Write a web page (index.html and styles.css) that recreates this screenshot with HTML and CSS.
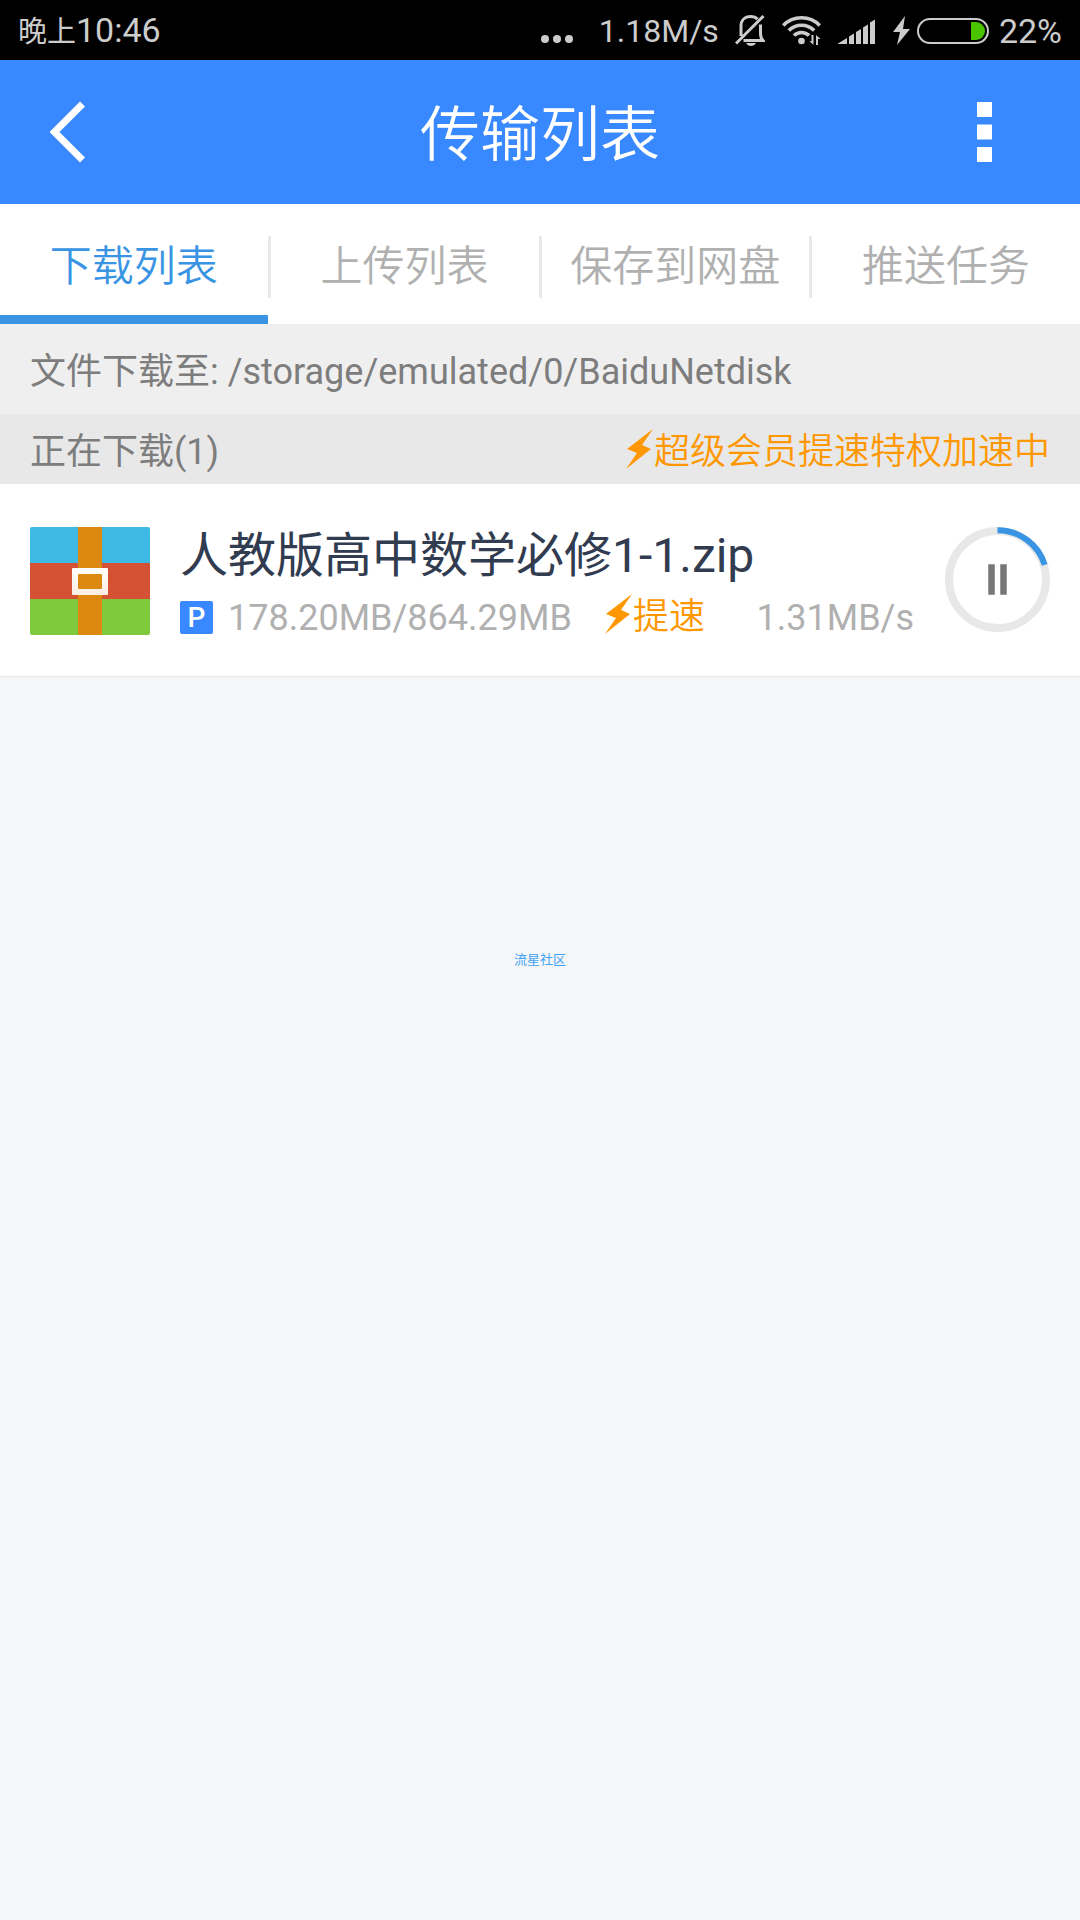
FILE: index.html
```html
<!DOCTYPE html>
<html lang="zh-CN">
<head>
<meta charset="utf-8">
<meta name="viewport" content="width=device-width, initial-scale=1">
<title>传输列表</title>
<link rel="stylesheet" href="styles.css">
</head>
<body>
<div class="status">
  <div class="status-time"><span class="status-cjk">晚上</span>10:46</div>
  <div class="status-right">
    <svg class="ic-more" width="32" height="32" viewBox="0 0 32 32" fill="currentColor" aria-hidden="true"><circle cx="4" cy="24" r="4"/><circle cx="16" cy="24" r="4"/><circle cx="28" cy="24" r="4"/></svg>
    <span class="status-speed">1.18M/s</span>
    <svg class="ic-bell" width="30" height="32" viewBox="0 0 30 32" fill="none" stroke="currentColor" stroke-width="3" aria-hidden="true"><path d="M6 21V11C6 5 10 1.500 15.500 1.500c3 0 5.500 1 7 2.600M8.500 25.500h19.500c-2-2-2.500-4-2.500-7v-9M1 28.500 28.500 1"/><path d="M11 28h10c-2 4-8 4-10 0z" fill="currentColor" stroke="none"/></svg>
    <svg class="ic-wifi" width="39" height="32" viewBox="0 0 39 32" fill="none" stroke="currentColor" stroke-width="3.600" aria-hidden="true"><path d="M1.200 10.500a25.500 25.500 0 0 1 36.600 0M6.800 15.500a18 18 0 0 1 25.400 0M12 20.600a10.500 10.500 0 0 1 15 0"/><circle cx="19.500" cy="26" r="3.300" fill="currentColor" stroke="none"/><path d="M29 19h8v11h-8z" fill="#000" stroke="none"/><path d="M31.500 20v10l-4-4h2v-6zM34 30V20l4.500 4H36v6z" fill="currentColor" stroke="none"/></svg>
    <svg class="ic-signal" width="38" height="32" viewBox="0 0 38 32" fill="currentColor" aria-hidden="true"><path d="M0 28.500 9 23v6H0zM11 21.500l5-3V29h-5zM18 17l5-3v15h-5zM25 12.500l5-3V29h-5zM32 7.500l5-3V29h-5z"/></svg>
    <svg class="ic-charge" width="17" height="32" viewBox="0 0 17 32" fill="currentColor" aria-hidden="true"><path d="M12 1 0 17h7L4 30 17 14h-7z"/></svg>
    <svg class="ic-battery" width="72" height="32" viewBox="0 0 72 32" aria-hidden="true"><rect x="1" y="4" width="70" height="24" rx="12" fill="none" stroke="currentColor" stroke-width="2"/><path d="M54 7h5a9 9 0 0 1 0 18h-5z" fill="#4bc400"/></svg>
    <span class="status-level">22%</span>
  </div>
</div>

<header class="header">
  <button class="header-btn header-back" type="button" aria-label="返回"><svg width="36" height="62" viewBox="0 0 36 62" fill="none" stroke="#fff" stroke-width="7"><path d="M32.500 3 4.500 31l28 28"/></svg></button>
  <h1 class="header-title">传输列表</h1>
  <button class="header-btn header-menu" type="button" aria-label="更多"><svg width="15" height="60" viewBox="0 0 15 60" fill="#fff"><path d="M0 0h15v15H0zM0 22.500h15v15H0zM0 45h15v15H0z"/></svg></button>
</header>

<nav class="tabs">
  <a class="tab tab-active" href="#download">下载列表</a>
  <a class="tab" href="#upload">上传列表</a>
  <a class="tab" href="#save">保存到网盘</a>
  <a class="tab" href="#push">推送任务</a>
</nav>

<main>
  <p class="path">文件下载至: /storage/emulated/0/BaiduNetdisk</p>
  <div class="section">
    <h2 class="section-title">正在下载(1)</h2>
    <div class="boost"><svg class="bolt" width="28" height="40" viewBox="0 0 28 40" fill="currentColor" aria-hidden="true"><path d="M27 0 1 20l10 4L0 40l25-20-9-4z"/></svg>超级会员提速特权加速中</div>
  </div>
  <ul class="list">
    <li class="item">
      <svg class="item-icon" width="120" height="108" viewBox="0 0 120 108" aria-hidden="true">
        <defs>
          <clipPath id="card"><rect width="120" height="108" rx="2"/></clipPath>
          <linearGradient id="buckle" x2="0" y2="1"><stop offset="0" stop-color="#fff"/><stop offset="1" stop-color="#faeee0"/></linearGradient>
        </defs>
        <g clip-path="url(#card)">
          <path d="M0 0h120v36H0z" fill="#3eb9e6"/><path d="M0 36h120v36H0z" fill="#d45133"/><path d="M0 72h120v36H0z" fill="#7eca3c"/>
          <path d="M48 0h24v108H48z" fill="#dd8911"/>
        </g>
        <rect x="42" y="41" width="36" height="27" rx="1" fill="url(#buckle)"/><rect x="48" y="47" width="24" height="15" rx="1" fill="#dd8911"/>
      </svg>
      <div class="item-body">
        <div class="item-name">人教版高中数学必修1-1.zip</div>
        <div class="item-meta">
          <span class="badge">P</span>
          <span class="size">178.20MB/864.29MB</span>
          <span class="boost"><svg class="bolt" width="28" height="40" viewBox="0 0 28 40" fill="currentColor" aria-hidden="true"><path d="M27 0 1 20l10 4L0 40l25-20-9-4z"/></svg>提速</span>
          <span class="speed">1.31MB/s</span>
        </div>
      </div>
      <button class="pause" type="button" aria-label="暂停"><svg width="105" height="105" viewBox="0 0 105 105" fill="none"><circle cx="52.500" cy="52.500" r="48.500" stroke="#e8e8e8" stroke-width="8"/><path d="M52.500 3.200a49.300 49.300 0 0 1 47.200 34.600" stroke="#3994e4" stroke-width="6"/><path d="M46.500 40.500v24M58.500 40.500v24" stroke="#777" stroke-width="6.500" stroke-linecap="square"/></svg></button>
    </li>
  </ul>
</main>
<div class="watermark">流星社区</div>
</body>
</html>
```
FILE: styles.css
```css
* { box-sizing: border-box; }

body {
  margin: 0;
  min-height: 100vh;
  position: relative;
  background: #f5f6f8;
  font-family: Roboto, "Noto Sans CJK SC", sans-serif;
  font-size: 36px;
  line-height: 48px;
}

svg { display: block; flex: none; }
h1, h2, p, ul { margin: 0; padding: 0; font-weight: 400; }
a { color: inherit; text-decoration: none; }
button { border: 0; padding: 0; background: none; }

.status {
  display: flex;
  justify-content: space-between;
  align-items: center;
  height: 60px;
  padding: 1px 18px 0;
  background: #000;
  color: #ccc;
  font-size: 34px;
}
.status-cjk { font-size: 29px; }
.status-right { display: flex; align-items: center; }
.status-speed { margin: 0 16px 0 26px; font-size: 32px; }
.ic-wifi { margin-left: 17px; }
.ic-signal { margin-left: 17px; }
.ic-charge { margin-left: 17px; }
.ic-battery { margin: 0 10px 0 7px; }

.header {
  display: grid;
  grid-template-columns: 1fr auto 1fr;
  align-items: center;
  height: 144px;
  background: #3888ff;
}
.header-title { padding-top: 8px; color: #fff; font-size: 60px; font-weight: 350; line-height: 84px; }
.header-btn { padding: 24px 50px; }
.header-menu { justify-self: end; padding-right: 88px; }
.header-back { justify-self: start; }

.tabs { display: flex; background: #fff; }
.tab {
  flex: 1 1 0;
  display: flex;
  align-items: center;
  justify-content: center;
  position: relative;
  height: 120px;
  padding-top: 6px;
  color: #b0b0b0;
  font-size: 42px;
  font-weight: 350;
}
.tab + .tab { border-left: 3px solid; border-image: linear-gradient(transparent 32px, #e8e8e8 32px 93px, transparent 93px) 1; border-width: 0 0 0 3px; }
.tab-active { color: #3994e4; box-shadow: inset 0 -9px #3994e4; }

.path { padding: 24px 30px 18px; background: #efefef; color: #7d7d7d; }
.section {
  display: flex;
  align-items: center;
  justify-content: space-between;
  height: 70px;
  padding: 5px 30px 0;
  background: #e8e8e8;
}
.section-title { color: #7d7d7d; font-size: 36px; }
.boost { display: flex; align-items: center; color: #ff9800; font-weight: 350; }
.bolt { margin-bottom: 6px; }

.list { list-style: none; }
.item {
  display: flex;
  padding: 43px 30px 35px;
  background: #fff;
  border-bottom: 1px solid #e8e8e8;
}
.item-body { flex: 1; min-width: 0; margin-left: 30px; }
.item-name { color: #323c50; font-size: 48px; line-height: 58px; }
.item-meta { display: flex; align-items: center; margin-top: 8px; height: 48px; color: #b0b0b0; }
.badge {
  width: 33px;
  height: 33px;
  border-radius: 2px;
  background: #3888ff;
  color: #fff;
  font-size: 28px;
  font-weight: 500;
  line-height: 33px;
  text-align: center;
}
.size { margin: 2px 33px 0 15px; }
.speed { margin: 2px 31px 0 auto; }
.pause { align-self: flex-start; }

.watermark {
  position: absolute;
  inset: 0;
  display: grid;
  place-items: center;
  color: #40a4f4;
  font-size: 13px;
  line-height: 16px;
  pointer-events: none;
}
```
